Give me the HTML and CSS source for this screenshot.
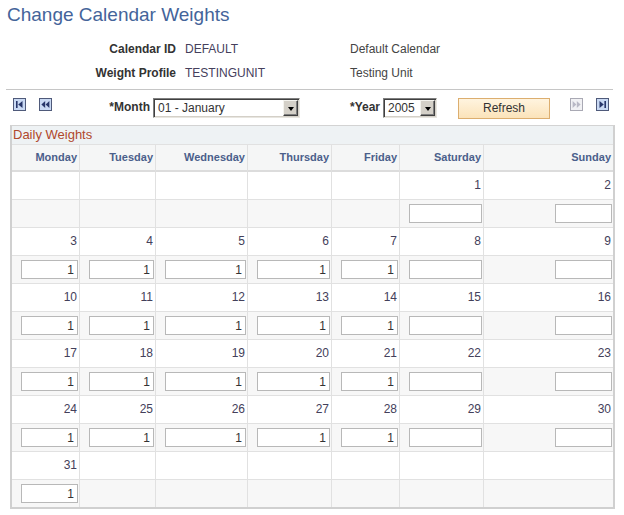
FILE: index.html
```html
<!DOCTYPE html>
<html>
<head>
<meta charset="utf-8">
<title>Change Calendar Weights</title>
<link rel="stylesheet" href="styles.css">
</head>
<body>
<div class="page">
  <h1 class="title">Change Calendar Weights</h1>

  <div class="info">
    <div class="lbl">Calendar ID</div><div class="val">DEFAULT</div><div class="desc">Default Calendar</div>
    <div class="lbl">Weight Profile</div><div class="val">TESTINGUNIT</div><div class="desc">Testing Unit</div>
  </div>

  <div class="divider"></div>

  <div class="nav">
    <svg class="nav-icon" width="13" height="13" viewBox="0 0 13 13"><rect x="0.5" y="0.5" width="12" height="12" fill="#c9d9f3" stroke="#4f5a7a"/><rect x="3" y="3" width="1.6" height="7" fill="#27366a"/><polygon points="9.5,3 9.5,10 5.2,6.5" fill="#27366a"/></svg>
    <svg class="nav-icon gap" width="13" height="13" viewBox="0 0 13 13"><rect x="0.5" y="0.5" width="12" height="12" fill="#c9d9f3" stroke="#4f5a7a"/><polygon points="6.2,3 6.2,10 2.4,6.5" fill="#27366a"/><polygon points="10.4,3 10.4,10 6.6,6.5" fill="#27366a"/></svg>

    <span class="nav-label month-label">*Month</span>
    <div class="select month-select"><span class="sel-text">01 - January</span><span class="dd-btn"><span class="dd-arrow"></span></span></div>

    <span class="nav-label year-label">*Year</span>
    <div class="select year-select"><span class="sel-text">2005</span><span class="dd-btn"><span class="dd-arrow"></span></span></div>

    <button class="refresh">Refresh</button>

    <svg class="nav-icon next" width="13" height="13" viewBox="0 0 13 13"><rect x="0.5" y="0.5" width="12" height="12" fill="#f1f1f4" stroke="#a9a9b4"/><polygon points="2.6,3 2.6,10 6.4,6.5" fill="#b9b9c6"/><polygon points="6.8,3 6.8,10 10.6,6.5" fill="#b9b9c6"/></svg>
    <svg class="nav-icon last" width="13" height="13" viewBox="0 0 13 13"><rect x="0.5" y="0.5" width="12" height="12" fill="#c9d9f3" stroke="#4f5a7a"/><polygon points="3.5,3 3.5,10 7.8,6.5" fill="#27366a"/><rect x="8.4" y="3" width="1.6" height="7" fill="#27366a"/></svg>
  </div>

  <div class="grid-box">
    <div class="grid-title">Daily Weights</div>
    <div class="cal">
      <div class="cell hdr">Monday</div><div class="cell hdr">Tuesday</div><div class="cell hdr">Wednesday</div><div class="cell hdr">Thursday</div><div class="cell hdr">Friday</div><div class="cell hdr">Saturday</div><div class="cell hdr sun">Sunday</div>

      <div class="cell num"></div><div class="cell num"></div><div class="cell num"></div><div class="cell num"></div><div class="cell num"></div><div class="cell num">1</div><div class="cell num sun">2</div>
      <div class="cell inp"></div><div class="cell inp"></div><div class="cell inp"></div><div class="cell inp"></div><div class="cell inp"></div><div class="cell inp"><input class="wt" value=""></div><div class="cell inp sun"><input class="wt wt-sun" value=""></div>

      <div class="cell num">3</div><div class="cell num">4</div><div class="cell num">5</div><div class="cell num">6</div><div class="cell num">7</div><div class="cell num">8</div><div class="cell num sun">9</div>
      <div class="cell inp"><input class="wt" value="1"></div><div class="cell inp"><input class="wt" value="1"></div><div class="cell inp"><input class="wt" value="1"></div><div class="cell inp"><input class="wt" value="1"></div><div class="cell inp"><input class="wt" value="1"></div><div class="cell inp"><input class="wt" value=""></div><div class="cell inp sun"><input class="wt wt-sun" value=""></div>

      <div class="cell num">10</div><div class="cell num">11</div><div class="cell num">12</div><div class="cell num">13</div><div class="cell num">14</div><div class="cell num">15</div><div class="cell num sun">16</div>
      <div class="cell inp"><input class="wt" value="1"></div><div class="cell inp"><input class="wt" value="1"></div><div class="cell inp"><input class="wt" value="1"></div><div class="cell inp"><input class="wt" value="1"></div><div class="cell inp"><input class="wt" value="1"></div><div class="cell inp"><input class="wt" value=""></div><div class="cell inp sun"><input class="wt wt-sun" value=""></div>

      <div class="cell num">17</div><div class="cell num">18</div><div class="cell num">19</div><div class="cell num">20</div><div class="cell num">21</div><div class="cell num">22</div><div class="cell num sun">23</div>
      <div class="cell inp"><input class="wt" value="1"></div><div class="cell inp"><input class="wt" value="1"></div><div class="cell inp"><input class="wt" value="1"></div><div class="cell inp"><input class="wt" value="1"></div><div class="cell inp"><input class="wt" value="1"></div><div class="cell inp"><input class="wt" value=""></div><div class="cell inp sun"><input class="wt wt-sun" value=""></div>

      <div class="cell num">24</div><div class="cell num">25</div><div class="cell num">26</div><div class="cell num">27</div><div class="cell num">28</div><div class="cell num">29</div><div class="cell num sun">30</div>
      <div class="cell inp"><input class="wt" value="1"></div><div class="cell inp"><input class="wt" value="1"></div><div class="cell inp"><input class="wt" value="1"></div><div class="cell inp"><input class="wt" value="1"></div><div class="cell inp"><input class="wt" value="1"></div><div class="cell inp"><input class="wt" value=""></div><div class="cell inp sun"><input class="wt wt-sun" value=""></div>

      <div class="cell num">31</div><div class="cell num"></div><div class="cell num"></div><div class="cell num"></div><div class="cell num"></div><div class="cell num"></div><div class="cell num sun"></div>
      <div class="cell inp last"><input class="wt" value="1"></div><div class="cell inp last"></div><div class="cell inp last"></div><div class="cell inp last"></div><div class="cell inp last"></div><div class="cell inp last"></div><div class="cell inp sun last"></div>
    </div>
  </div>
</div>
</body>
</html>
```

FILE: styles.css
```css
* { box-sizing: border-box; }

body {
  margin: 0;
  background: #ffffff;
  font-family: "Liberation Sans", Arial, sans-serif;
  font-size: 12px;
  color: #333333;
}

.page {
  width: 624px;
}

.title {
  margin: 0;
  padding: 4px 0 0 7px;
  font-size: 19px;
  line-height: 22px;
  font-weight: normal;
  color: #44649a;
}

.info {
  margin-top: 11px;
  display: grid;
  grid-template-columns: 176px 174px 1fr;
  column-gap: 0;
}

.info > div {
  line-height: 24px;
  height: 24px;
  white-space: nowrap;
}

.lbl {
  text-align: right;
  font-weight: bold;
  color: #333333;
}

.val {
  padding-left: 9px;
  color: #45405c;
}

.desc {
  color: #444444;
}

.divider {
  margin: 4px 0 0 6px;
  width: 607px;
  height: 1px;
  background: #c6c6c6;
}

.nav {
  margin-top: 7px;
  height: 22px;
  padding-left: 13px;
  display: flex;
  align-items: center;
}

.nav-icon {
  display: block;
  flex: none;
  align-self: flex-start;
  margin-top: 1px;
}

.nav-icon.gap { margin-left: 13px; }
.nav-icon.next { margin-left: 20px; }
.nav-icon.last { margin-left: 13px; }

.nav-label {
  align-self: flex-start;
  margin-top: 1px;
  line-height: 18px;
  text-align: right;
  font-weight: bold;
  color: #333333;
  flex: none;
}

.month-label { width: 98px; }
.year-label { width: 80px; }

.select {
  flex: none;
  height: 20px;
  margin-left: 3px;
  display: flex;
  align-items: stretch;
  background: #ffffff;
  border-top: 1px solid #7f7f7f;
  border-left: 1px solid #7f7f7f;
  border-right: 1px solid #e8e6e0;
  border-bottom: 1px solid #e8e6e0;
  box-shadow: inset 1px 1px 0 #404040, inset -1px -1px 0 #d4d0c8;
  padding: 1px;
}

.month-select { width: 147px; }
.year-select { width: 54px; }

.sel-text {
  flex: 1;
  padding-left: 3px;
  line-height: 16px;
  color: #333333;
  white-space: nowrap;
  overflow: hidden;
}

.dd-btn {
  flex: none;
  width: 15px;
  height: 16px;
  background: #d4d0c8;
  border-top: 1px solid #f4f3ee;
  border-left: 1px solid #f4f3ee;
  border-right: 1px solid #404040;
  border-bottom: 1px solid #404040;
  box-shadow: inset -1px -1px 0 #808080;
  display: flex;
  align-items: center;
  justify-content: center;
}

.dd-arrow {
  width: 0;
  height: 0;
  border-left: 3.5px solid transparent;
  border-right: 3.5px solid transparent;
  border-top: 4px solid #000000;
  margin-top: 1px;
}

.refresh {
  flex: none;
  margin-left: 21px;
  width: 92px;
  height: 21px;
  padding: 0;
  border: 1px solid #dcae6f;
  background: linear-gradient(#fff4df, #fbe3ba);
  font-family: "Liberation Sans", Arial, sans-serif;
  font-size: 12px;
  color: #333333;
  line-height: 19px;
  text-align: center;
}

.grid-box {
  margin: 6px 0 0 10px;
  width: 605px;
  border-top: 1px solid #d3d3d3;
  border-left: 2px solid #d0d0d0;
  border-right: 2px solid #d0d0d0;
  border-bottom: 2px solid #d0d0d0;
}

.grid-title {
  height: 18px;
  line-height: 18px;
  padding-left: 1px;
  background: #eef2f4;
  font-size: 13px;
  color: #b0482c;
}

.cal {
  display: grid;
  grid-template-columns: 68px 76px 92px 84px 68px 84px 129px;
}

.cell {
  border-right: 1px solid #e1e1e1;
  border-bottom: 1px solid #e1e1e1;
  height: 28px;
}

.cell.sun { border-right: none; }
.cell.last { border-bottom: none; height: 27px; }

.hdr {
  border-top: 1px solid #e1e1e1;
  border-bottom: 2px solid #dcdcdc;
  background: #f5f6f6;
  text-align: right;
  padding-right: 2px;
  font-size: 11px;
  font-weight: bold;
  line-height: 25px;
  color: #4b5f8b;
}

.num {
  background: #ffffff;
  text-align: right;
  padding-right: 2px;
  line-height: 27px;
  color: #43405a;
}

.inp {
  background: #f7f7f7;
  display: flex;
  align-items: center;
  justify-content: flex-end;
  padding: 0 1px 0 9px;
}

.wt {
  display: block;
  width: 100%;
  height: 19px;
  margin: 0;
  padding: 0 3px 0 2px;
  border: 1px solid #b8b8b8;
  background: #ffffff;
  font-family: "Liberation Sans", Arial, sans-serif;
  font-size: 12px;
  color: #333333;
  text-align: right;
  outline: none;
}

.wt-sun { width: 57px; flex: none; }
```
